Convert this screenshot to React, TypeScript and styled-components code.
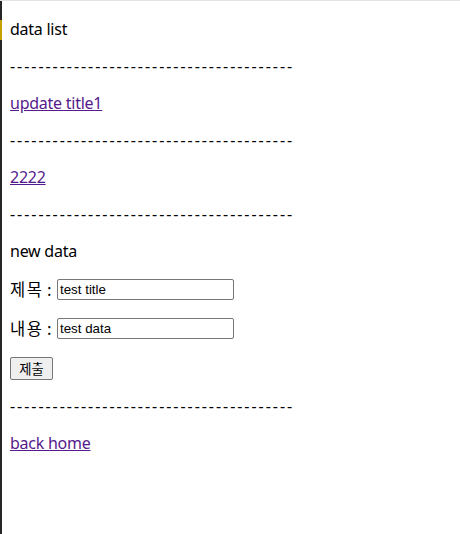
import React from 'react';
import styled, { createGlobalStyle } from 'styled-components';

const GlobalStyle = createGlobalStyle`
  html, body {
    margin: 0;
    padding: 0;
    background: #ffffff;
  }
  body {
    font-family: 'Noto Sans', 'Noto Sans CJK KR', sans-serif;
    font-size: 16px;
    color: #000;
  }
`;

const Frame = styled.div`
  display: flex;
  min-height: 534px;
  border-top: 1px solid #e3e3e3;
  box-sizing: border-box;
`;

const EdgeBar = styled.div`
  flex: 0 0 2px;
  background: linear-gradient(to bottom, #262626 0 19px, #c7a100 19px 39px, #262626 39px);
`;

const Content = styled.div`
  flex: 1;
  padding: 18px 8px 0;
`;

const Para = styled.p<{ $h?: number }>`
  margin: 0 0 16px;
  line-height: 21px;
  height: ${(p) => p.$h ?? 21}px;
  display: flex;
  align-items: center;
  letter-spacing: -0.25px;
`;

const Divider = styled(Para)`
  letter-spacing: 1.95px;
  white-space: nowrap;
`;

const TextLink = styled.a`
  color: #551a8b;
  text-decoration: underline;
  cursor: pointer;
`;

const Label = styled.span`
  display: inline-flex;
  justify-content: space-between;
  width: 43px;
  margin-right: 4px;
  font-family: 'Noto Sans CJK KR', sans-serif;
  font-size: 16.5px;
  letter-spacing: 1.5px;
`;

const Input = styled.input`
  width: 177px;
  height: 21px;
  box-sizing: border-box;
  padding: 1px 2px;
  border: 1px solid #767676;
  border-radius: 2px;
  font-family: 'Liberation Sans', Arial, sans-serif;
  font-size: 13.33px;
  letter-spacing: 0;
  color: #000;
`;

const SubmitButton = styled.button`
  height: 23px;
  width: 43px;
  padding: 0;
  border: 1px solid #767676;
  border-radius: 2px;
  background: #efefef;
  font-family: 'Noto Sans CJK KR', sans-serif;
  font-size: 13.33px;
  color: #000;
`;

const DASHES = '----------------------------------------';

const Field = ({ label, value }: { label: string; value: string }) => (
  <Para $h={23}>
    <Label>
      <span>{label}</span>
      <span>:</span>
    </Label>
    <Input type="text" defaultValue={value} />
  </Para>
);

const App = () => {
  return (
    <>
      <GlobalStyle />
      <Frame>
        <EdgeBar />
        <Content>
          <Para>data list</Para>
          <Divider>{DASHES}</Divider>
          <Para>
            <TextLink>update title1</TextLink>
          </Para>
          <Divider>{DASHES}</Divider>
          <Para>
            <TextLink>2222</TextLink>
          </Para>
          <Divider>{DASHES}</Divider>
          <Para>new data</Para>
          <Field label="제목" value="test title" />
          <Field label="내용" value="test data" />
          <Para $h={24}>
            <SubmitButton>제출</SubmitButton>
          </Para>
          <Divider>{DASHES}</Divider>
          <Para>
            <TextLink>back home</TextLink>
          </Para>
        </Content>
      </Frame>
    </>
  );
};

export default App;
